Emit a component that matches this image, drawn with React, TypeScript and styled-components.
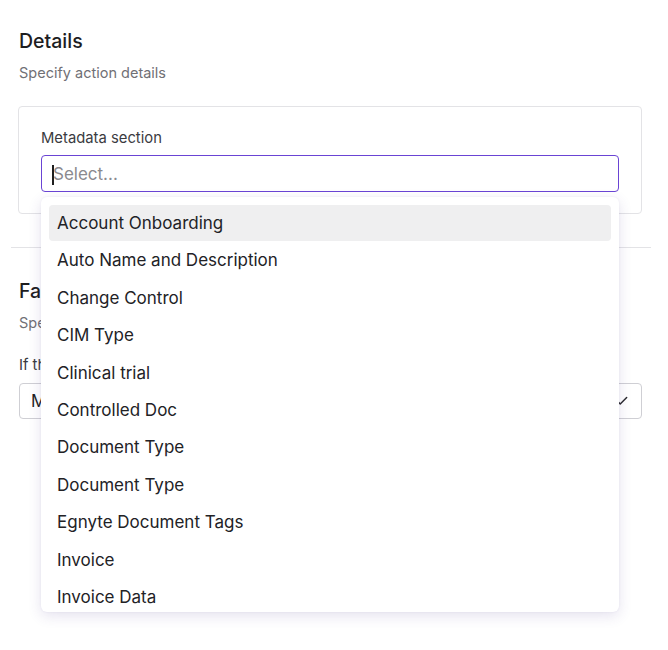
import React from "react";
import styled, { createGlobalStyle } from "styled-components";
import { Check } from "lucide-react";

const GlobalStyle = createGlobalStyle`
    body {
        margin: 0;
        background: #ffffff;
        font-family: "Inter", "Liberation Sans", sans-serif;
        color: #1f1f1f;
    }
`;

const Page = styled.div`
    min-height: 650px;
    box-sizing: border-box;
    padding: 28px 26px 40px 18px;
`;

const Section = styled.section`
    display: flex;
    flex-direction: column;
`;

const Title = styled.h2`
    margin: 0 0 0 1px;
    font-size: 19.5px;
    line-height: 26px;
    font-weight: 500;
    color: #1d1d1f;
`;

const Subtitle = styled.p`
    margin: 9px 0 0 1px;
    font-size: 14.5px;
    line-height: 20px;
    color: #707075;
`;

const Card = styled.div`
    margin-top: 23px;
    border: 1px solid #e3e3e6;
    border-radius: 4px;
    padding: 21px 22px 21px 22px;
`;

const FieldLabel = styled.label`
    display: block;
    font-size: 14.8px;
    line-height: 20px;
    color: #3b3b3f;
`;

const SelectWrap = styled.div`
    position: relative;
    margin-top: 7px;
`;

const SelectInput = styled.div<{ $focused?: boolean }>`
    display: flex;
    align-items: center;
    justify-content: space-between;
    height: 37px;
    box-sizing: border-box;
    padding: 0 12px 0 11px;
    border: 1px solid ${(p) => (p.$focused ? "#6a44d4" : "#cfcfd4")};
    border-radius: 4px;
    font-size: 17px;
    color: #1f1f1f;
`;

const Placeholder = styled.span`
    color: #8a8a8f;
    position: relative;
    &::before {
        content: "";
        position: absolute;
        left: -1px;
        top: 1px;
        width: 1.5px;
        height: 20px;
        background: #1f1f1f;
    }
`;

const Menu = styled.div`
    position: absolute;
    top: 42px;
    left: 0;
    right: 0;
    height: 415px;
    overflow: hidden;
    box-sizing: border-box;
    padding: 8px 8px 0 8px;
    background: #ffffff;
    border-radius: 6px;
    box-shadow: 0 4px 14px rgba(70, 50, 140, 0.14), 0 0 2px rgba(70, 50, 140, 0.08);
    z-index: 5;
`;

const MenuItem = styled.div<{ $active?: boolean }>`
    display: flex;
    align-items: center;
    height: 36px;
    margin-bottom: 1.4px;
    padding: 0 8px;
    border-radius: 4px;
    font-size: 17px;
    color: #222226;
    background: ${(p) => (p.$active ? "#efeff0" : "transparent")};
`;

const Divider = styled.hr`
    margin: 33px -9px 0 -7px;
    border: none;
    border-top: 1px solid #e3e3e6;
`;

const SecondSection = styled(Section)`
    margin-top: 30px;
`;

const Question = styled.p`
    margin: 22px 0 0 1px;
    font-size: 14.8px;
    line-height: 20px;
    color: #3b3b3f;
`;

const PlainSelect = styled(SelectInput)`
    margin-top: 8px;
    margin-left: 1px;
    height: 36px;
`;

const options = [
    "Account Onboarding",
    "Auto Name and Description",
    "Change Control",
    "CIM Type",
    "Clinical trial",
    "Controlled Doc",
    "Document Type",
    "Document Type",
    "Egnyte Document Tags",
    "Invoice",
    "Invoice Data",
];

const App: React.FC = () => {
    return (
        <>
            <GlobalStyle />
            <Page>
                <Section>
                    <Title>Details</Title>
                    <Subtitle>Specify action details</Subtitle>
                    <Card>
                        <FieldLabel>Metadata section</FieldLabel>
                        <SelectWrap>
                            <SelectInput $focused>
                                <Placeholder>Select...</Placeholder>
                            </SelectInput>
                            <Menu>
                                {options.map((o, i) => (
                                    <MenuItem key={i} $active={i === 0}>
                                        {o}
                                    </MenuItem>
                                ))}
                            </Menu>
                        </SelectWrap>
                    </Card>
                </Section>
                <Divider />
                <SecondSection>
                    <Title>Failure handling</Title>
                    <Subtitle>Specify what happens when the action fails</Subtitle>
                    <Question>If the metadata section is not found</Question>
                    <PlainSelect>
                        <span>Mark as failed</span>
                        <Check size={14} strokeWidth={2.5} color="#2a2a2e" />
                    </PlainSelect>
                </SecondSection>
            </Page>
        </>
    );
};

export default App;
